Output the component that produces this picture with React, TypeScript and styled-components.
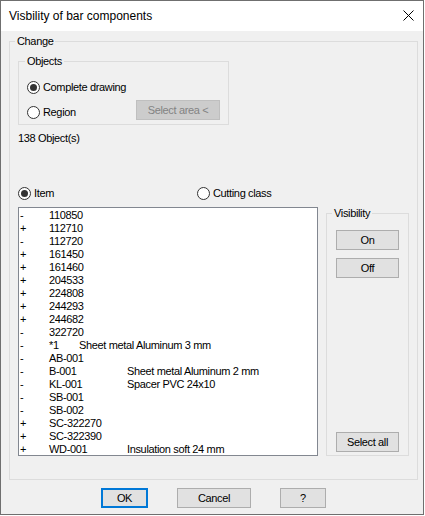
import React from "react";
import styled, { createGlobalStyle } from "styled-components";

const GlobalStyle = createGlobalStyle`
  html, body {
    margin: 0;
    padding: 0;
    background: #ffffff;
  }
  body {
    font-family: "Liberation Sans", Arial, sans-serif;
  }
`;

type Entry = { sign: "+" | "-"; item: string; desc?: string; short?: boolean };

const entries: Entry[] = [
  { sign: "-", item: "110850" },
  { sign: "+", item: "112710" },
  { sign: "-", item: "112720" },
  { sign: "+", item: "161450" },
  { sign: "+", item: "161460" },
  { sign: "+", item: "204533" },
  { sign: "+", item: "224808" },
  { sign: "+", item: "244293" },
  { sign: "+", item: "244682" },
  { sign: "-", item: "322720" },
  { sign: "-", item: "*1", desc: "Sheet metal Aluminum 3 mm", short: true },
  { sign: "-", item: "AB-001" },
  { sign: "-", item: "B-001", desc: "Sheet metal Aluminum 2 mm" },
  { sign: "-", item: "KL-001", desc: "Spacer PVC 24x10" },
  { sign: "-", item: "SB-001" },
  { sign: "-", item: "SB-002" },
  { sign: "+", item: "SC-322270" },
  { sign: "+", item: "SC-322390" },
  { sign: "+", item: "WD-001", desc: "Insulation soft 24 mm" },
];

export default function App() {
  return (
    <>
      <GlobalStyle />
      <Window>
        <TitleBar>
          <span>Visbility of bar components</span>
          <svg width="11" height="11" viewBox="0 0 11 11">
            <path d="M0.5 0.5 L10.5 10.5 M10.5 0.5 L0.5 10.5" stroke="#000" strokeWidth="1" />
          </svg>
        </TitleBar>

        <Body>
          <ChangeGroup>
            <GroupTitle $indent={7}>Change</GroupTitle>

            <ObjectsGroup>
              <GroupTitle $indent={8}>Objects</GroupTitle>
              <ObjectsBody>
                <Option>
                  <Radio $checked />
                  Complete drawing
                </Option>
                <RegionRow>
                  <Option $lift>
                    <Radio />
                    Region
                  </Option>
                  <Button $width={84} disabled>
                    Select area &lt;
                  </Button>
                </RegionRow>
              </ObjectsBody>
            </ObjectsGroup>

            <CountText>138 Object(s)</CountText>

            <ScopeRow>
              <Option>
                <Radio $checked />
                Item
              </Option>
              <Option>
                <Radio />
                Cutting class
              </Option>
            </ScopeRow>

            <ListArea>
              <ListBox>
                {entries.map((e) => (
                  <ItemLine key={e.item}>
                    <SignCell>{e.sign}</SignCell>
                    <ItemCell $width={e.short ? 30 : 78}>{e.item}</ItemCell>
                    {e.desc && <span>{e.desc}</span>}
                  </ItemLine>
                ))}
              </ListBox>

              <VisibilityGroup>
                <GroupTitle $indent={7}>Visibility</GroupTitle>
                <VisibilityBody>
                  <Button $width={63}>On</Button>
                  <Button $width={63}>Off</Button>
                  <PushDown>
                    <Button $width={63}>Select all</Button>
                  </PushDown>
                </VisibilityBody>
              </VisibilityGroup>
            </ListArea>
          </ChangeGroup>

          <Footer>
            <Button $width={47} $default>
              OK
            </Button>
            <Button $width={74}>Cancel</Button>
            <Button $width={46}>?</Button>
          </Footer>
        </Body>
      </Window>
    </>
  );
}

const Window = styled.div`
  width: 424px;
  height: 515px;
  box-sizing: border-box;
  border: 1px solid #6f6f6f;
  background: #f0f0f0;
  display: flex;
  flex-direction: column;
  font-size: 11px;
  letter-spacing: -0.35px;
  color: #000;
`;

const TitleBar = styled.div`
  height: 30px;
  flex-shrink: 0;
  background: #ffffff;
  display: flex;
  align-items: center;
  justify-content: space-between;
  padding: 0 9px 0 8px;
  font-size: 12px;
  letter-spacing: 0;
  line-height: 30px;

  & > svg {
    margin-top: -1px;
  }
`;

const Body = styled.div`
  flex: 1;
  padding: 10px 0 0 8px;
`;

const GroupBox = styled.div`
  box-sizing: border-box;
  border: 1px solid #dcdcdc;
  display: flex;
  flex-direction: column;
`;

const GroupTitle = styled.span<{ $indent: number }>`
  align-self: flex-start;
  margin: -7px 0 0 ${({ $indent }) => $indent - 2}px;
  padding: 0 2px;
  line-height: 13px;
  height: 13px;
  background: #f0f0f0;
  white-space: nowrap;
`;

const ChangeGroup = styled(GroupBox)`
  width: 409px;
  height: 439px;
`;

const ObjectsGroup = styled(GroupBox)`
  width: 211px;
  height: 64px;
  margin: 13px 0 0 8px;
`;

const ObjectsBody = styled.div`
  display: flex;
  flex-direction: column;
  padding: 13px 8px 0 8px;
`;

const Option = styled.label<{ $lift?: boolean }>`
  display: inline-flex;
  align-items: center;
  gap: 3px;
  height: 13px;
  line-height: 13px;
  white-space: nowrap;
  margin-bottom: ${({ $lift }) => ($lift ? 1 : 0)}px;
`;

const Radio = styled.span<{ $checked?: boolean }>`
  width: 13px;
  height: 13px;
  box-sizing: border-box;
  border: 1px solid #333333;
  border-radius: 50%;
  background: #ffffff;
  display: flex;
  align-items: center;
  justify-content: center;
  flex-shrink: 0;

  &::after {
    content: "";
    width: 7px;
    height: 7px;
    border-radius: 50%;
    background: ${({ $checked }) => ($checked ? "#333333" : "transparent")};
  }
`;

const RegionRow = styled.div`
  display: flex;
  justify-content: space-between;
  align-items: flex-end;
  height: 20px;
  margin-top: 6px;
`;

const Button = styled.button<{ $width: number; $default?: boolean }>`
  width: ${({ $width }) => $width}px;
  height: 20px;
  box-sizing: border-box;
  padding: 0;
  margin: 0;
  font-family: inherit;
  font-size: 11px;
  letter-spacing: -0.35px;
  line-height: 13px;
  color: #000;
  background: #e1e1e1;
  border: ${({ $default }) => ($default ? "2px solid #0078d7" : "1px solid #adadad")};
  border-radius: 0;
  flex-shrink: 0;

  &:disabled {
    background: #cccccc;
    border-color: #bfbfbf;
    color: #838383;
  }
`;

const CountText = styled.div`
  margin: 7px 0 0 8px;
  line-height: 13px;
  height: 13px;
`;

const ScopeRow = styled.div`
  display: grid;
  grid-template-columns: 179px auto;
  justify-content: start;
  margin: 42px 0 0 8px;
`;

const ListArea = styled.div`
  display: flex;
  align-items: flex-start;
  gap: 8px;
  margin: 7px 0 0 8px;
`;

const ListBox = styled.div`
  width: 300px;
  height: 249px;
  box-sizing: border-box;
  border: 1px solid #828790;
  background: #ffffff;
  padding: 1px 0 0 1px;
  overflow: hidden;
`;

const ItemLine = styled.div`
  display: flex;
  height: 13px;
  line-height: 13px;
  white-space: nowrap;
`;

const SignCell = styled.span`
  width: 29px;
  flex-shrink: 0;
`;

const ItemCell = styled.span<{ $width: number }>`
  width: ${({ $width }) => $width}px;
  flex-shrink: 0;
`;

const VisibilityGroup = styled(GroupBox)`
  width: 83px;
  height: 243px;
  margin-top: 6px;
`;

const VisibilityBody = styled.div`
  flex: 1;
  display: flex;
  flex-direction: column;
  align-items: center;
  gap: 8px;
  padding: 10px 0 3px;
`;

const PushDown = styled.div`
  margin-top: auto;
`;

const Footer = styled.div`
  display: flex;
  gap: 29px;
  margin-top: 8px;
  padding-left: 92px;
`;
